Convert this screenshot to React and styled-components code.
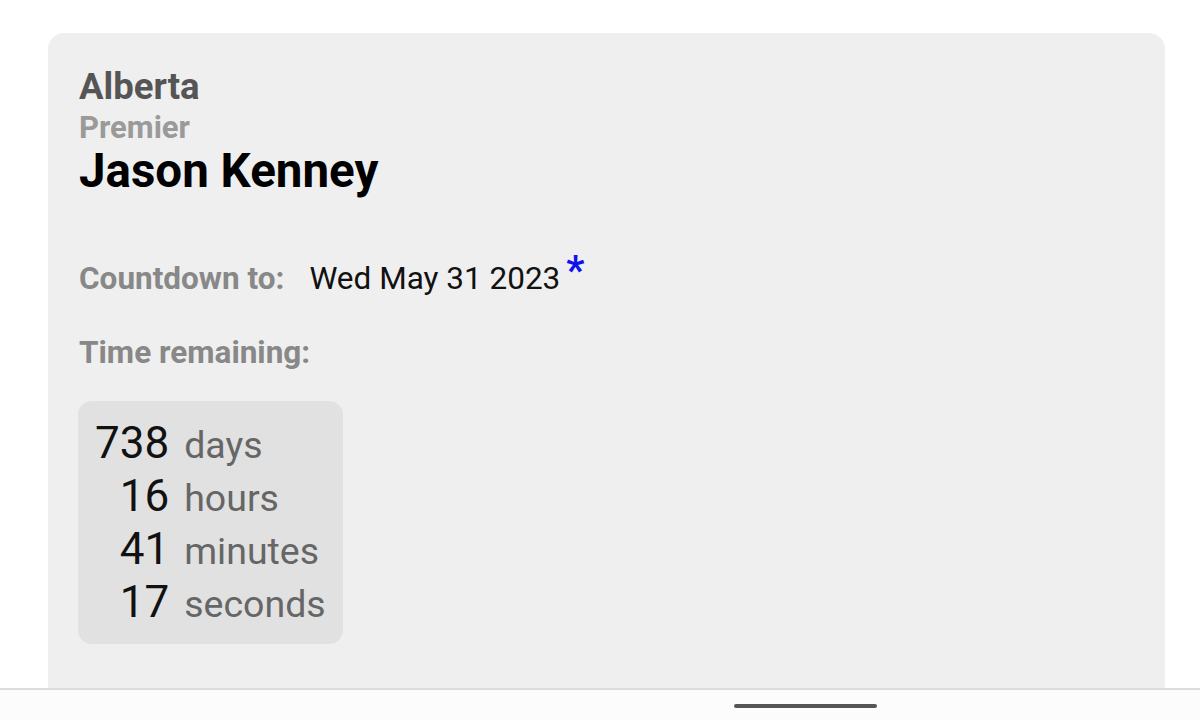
import styled, { createGlobalStyle } from "styled-components";

const GlobalStyle = createGlobalStyle`
  html, body {
    margin: 0;
    padding: 0;
    background: #fff;
  }
  body {
    font-family: Roboto, "Noto Sans", Arial, sans-serif;
  }
`;

const Page = styled.div`
  width: 1200px;
  height: 720px;
  display: flex;
  flex-direction: column;
  overflow: hidden;
  background: #fff;
`;

const Screen = styled.main`
  flex: 1;
  overflow: hidden;
  padding: 33px 35px 0 48px;
`;

const Card = styled.section`
  background: #efefef;
  border-radius: 16px;
  padding: 32px 30px 120px;
`;

const Province = styled.div`
  font-size: 36.5px;
  line-height: 44px;
  font-weight: 700;
  color: #555;
  padding-left: 1px;
`;

const Office = styled.div`
  font-size: 31px;
  line-height: 37px;
  font-weight: 700;
  color: #9a9a9a;
  padding-left: 1px;
`;

const Name = styled.h1`
  margin: 0;
  font-size: 47.5px;
  line-height: 50px;
  font-weight: 700;
  color: #000;
  padding-left: 1px;
`;

const Row = styled.div`
  display: flex;
  align-items: baseline;
  font-size: 31.5px;
  line-height: 38px;
  margin-top: ${(p) => p.$top}px;
  padding-left: 1px;
`;

const Label = styled.span`
  font-weight: 700;
  color: #888;
  margin-right: 25px;
`;

const Value = styled.span`
  color: #111;
`;

const Star = styled.span`
  color: #1010f0;
  font-size: 40px;
  font-weight: 700;
  margin-left: 6px;
  position: relative;
  top: -5px;
`;

const Timer = styled.div`
  display: inline-grid;
  grid-template-columns: auto auto;
  column-gap: 15px;
  align-items: baseline;
  margin-top: 29px;
  padding: 16px 17px 15px;
  background: #e1e1e1;
  border-radius: 14px;
`;

const Num = styled.span`
  font-size: 44px;
  line-height: 53px;
  color: #111;
  text-align: right;
`;

const Unit = styled.span`
  font-size: 37.5px;
  line-height: 44px;
  color: #666;
`;

const NavBar = styled.footer`
  height: 32px;
  flex-shrink: 0;
  border-top: 2px solid #dcdcdc;
  background: #fcfcfc;
  display: flex;
  justify-content: center;
  padding-left: 410px;
  padding-top: 14px;
  box-sizing: border-box;
`;

const Handle = styled.div`
  width: 143px;
  height: 4px;
  border-radius: 2px;
  background: #555;
`;

const remaining = [
  ["738", "days"],
  ["16", "hours"],
  ["41", "minutes"],
  ["17", "seconds"],
];

export default function App() {
  return (
    <>
      <GlobalStyle />
      <Page>
        <Screen>
          <Card>
            <Province>Alberta</Province>
            <Office>Premier</Office>
            <Name>Jason Kenney</Name>
            <Row $top={61}>
              <Label>Countdown to:</Label>
              <Value>Wed May 31 2023</Value>
              <Star>*</Star>
            </Row>
            <Row $top={36}>
              <Label>Time remaining:</Label>
            </Row>
            <Timer>
              {remaining.map(([n, u]) => [
                <Num key={u + "-n"}>{n}</Num>,
                <Unit key={u}>{u}</Unit>,
              ])}
            </Timer>
          </Card>
        </Screen>
        <NavBar>
          <Handle />
        </NavBar>
      </Page>
    </>
  );
}
